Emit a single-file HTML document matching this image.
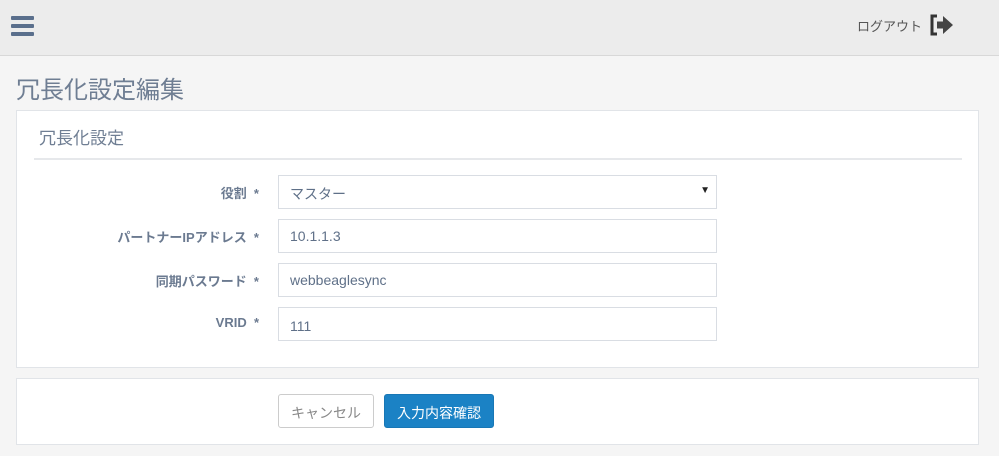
<!DOCTYPE html>
<html><head><meta charset="utf-8"><style>
*{box-sizing:border-box;margin:0;padding:0}
body{width:999px;height:456px;background:#f5f5f5;font-family:"Liberation Sans","Noto Sans CJK JP",sans-serif;position:relative;overflow:hidden;color:#5f7088}
.top{position:absolute;left:0;top:0;width:999px;height:56px;background:#ececec;border-bottom:1px solid #d8d8d8}
.ham{position:absolute;left:11px;top:16px;width:23px}
.ham div{height:4px;background:#5a6f8c;margin-bottom:4px;border-radius:1px}
.logout{position:absolute;left:857px;top:16px;font-size:13px;color:#555}
h1{position:absolute;left:16px;top:70px;font-size:24px;font-weight:normal;color:#6f7e93}
.panel{position:absolute;left:16px;background:#fff;border:1px solid #e1e4e8}
.ph{position:absolute;left:22px;top:13px;font-size:17px;color:#6f7e93}
.hr{position:absolute;left:17px;top:47px;width:928px;height:2px;background:#e6e8eb}
.lab{position:absolute;right:740px;font-size:13px;font-weight:bold;color:#6b7a90;text-align:right;white-space:nowrap}
.inp{position:absolute;left:278px;width:439px;height:34px;border:1px solid #d9dde3;background:#fff;font-size:14px;color:#5f7088;padding:8px 11px}
.btn{position:absolute;top:394px;height:34px;font-size:14px;border-radius:3px;padding:8px 12px}
</style></head><body>
<div class="top">
<div class="ham"><div></div><div></div><div></div></div>
<div class="logout">ログアウト</div>
<svg style="position:absolute;left:929px;top:13px" width="26" height="24" viewBox="0 0 26 24"><path d="M8 3H3v18h5" fill="none" stroke="#333" stroke-width="3"/><path d="M8 8.5h6V3l10 9-10 9v-5.5H8z" fill="#444"/></svg>
</div>
<h1>冗長化設定編集</h1>
<div class="panel" style="top:110px;width:963px;height:258px">
<div class="ph">冗長化設定</div><div class="hr"></div>
</div>
<div class="lab" style="top:183px">役割&nbsp; *</div>
<div class="lab" style="top:227px">パートナーIPアドレス&nbsp; *</div>
<div class="lab" style="top:271px">同期パスワード&nbsp; *</div>
<div class="lab" style="top:315px">VRID&nbsp; *</div>
<div class="inp" style="top:175px">マスター<span style="position:absolute;right:6px;top:9px;font-size:10px;color:#222">▼</span></div>
<div class="inp" style="top:219px">10.1.1.3</div>
<div class="inp" style="top:263px">webbeaglesync</div>
<div class="inp" style="top:307px;padding-top:10px">111</div>
<div class="panel" style="top:378px;width:963px;height:67px"></div>
<div class="btn" style="left:278px;width:96px;border:1px solid #ccc;background:#fff;color:#888">キャンセル</div>
<div class="btn" style="left:384px;width:110px;background:#1b82c5;color:#fff;border:1px solid #1877b5">入力内容確認</div>
</body></html>
